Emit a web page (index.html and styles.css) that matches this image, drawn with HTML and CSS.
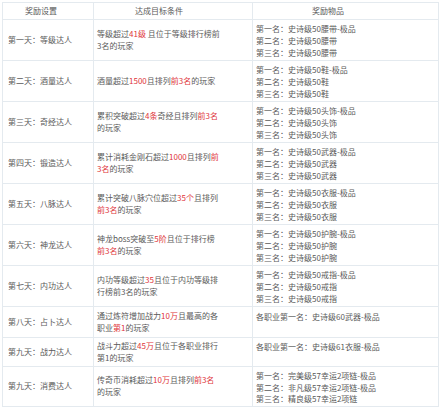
FILE: index.html
```html
<!DOCTYPE html>
<html lang="zh-CN">
<head>
<meta charset="utf-8">
<link rel="stylesheet" href="styles.css">
</head>
<body>
<table class="reward">
  <colgroup>
    <col class="col-day">
    <col class="col-cond">
    <col class="col-prize">
  </colgroup>
  <thead>
    <tr>
      <th class="h-day">奖励设置</th>
      <th class="h-cond">达成目标条件</th>
      <th class="h-prize">奖励物品</th>
    </tr>
  </thead>
  <tbody>
    <tr>
      <td class="day">第一天：等级达人</td>
      <td class="cond">等级超过<span class="red">41级</span> 且位于等级排行榜前<br>3名的玩家</td>
      <td class="prize">第一名：史诗级50腰带-极品<br>第二名：史诗级50腰带<br>第三名：史诗级50腰带</td>
    </tr>
    <tr>
      <td class="day">第二天：酒量达人</td>
      <td class="cond">酒量超过<span class="red">1500</span>且排列<span class="red">前3名</span>的玩家</td>
      <td class="prize">第一名：史诗级50鞋-极品<br>第二名：史诗级50鞋<br>第三名：史诗级50鞋</td>
    </tr>
    <tr>
      <td class="day">第三天：奇经达人</td>
      <td class="cond">累积突破超过<span class="red">4条</span>奇经且排列<span class="red">前3名</span><br>的玩家</td>
      <td class="prize">第一名：史诗级50头饰-极品<br>第二名：史诗级50头饰<br>第三名：史诗级50头饰</td>
    </tr>
    <tr>
      <td class="day">第四天：锻造达人</td>
      <td class="cond">累计消耗金刚石超过<span class="red">1000</span>且排列<span class="red">前</span><br><span class="red">3名</span>的玩家</td>
      <td class="prize">第一名：史诗级50武器-极品<br>第二名：史诗级50武器<br>第三名：史诗级50武器</td>
    </tr>
    <tr>
      <td class="day">第五天：八脉达人</td>
      <td class="cond">累计突破八脉穴位超过<span class="red">35个</span>且排列<br><span class="red">前3名</span>的玩家</td>
      <td class="prize">第一名：史诗级50衣服-极品<br>第二名：史诗级50衣服<br>第三名：史诗级50衣服</td>
    </tr>
    <tr>
      <td class="day">第六天：神龙达人</td>
      <td class="cond">神龙boss突破至<span class="red">5阶</span>且位于排行榜<br><span class="red">前3名</span>的玩家</td>
      <td class="prize">第一名：史诗级50护腕-极品<br>第二名：史诗级50护腕<br>第三名：史诗级50护腕</td>
    </tr>
    <tr>
      <td class="day">第七天：内功达人</td>
      <td class="cond">内功等级超过<span class="red">35</span>且位于内功等级排<br>行榜前3名的玩家</td>
      <td class="prize">第一名：史诗级50戒指-极品<br>第二名：史诗级50戒指<br>第三名：史诗级50戒指</td>
    </tr>
    <tr class="two">
      <td class="day">第八天：占卜达人</td>
      <td class="cond">通过炼符增加战力<span class="red">10万</span>且最高的各<br>职业<span class="red">第1</span>的玩家</td>
      <td class="prize">各职业第一名：史诗级60武器-极品</td>
    </tr>
    <tr>
      <td class="day">第九天：战力达人</td>
      <td class="cond">战斗力超过<span class="red">45万</span>且位于各职业排行<br>第1的玩家</td>
      <td class="prize">各职业第一名：史诗级61衣服-极品</td>
    </tr>
    <tr class="last">
      <td class="day">第九天：消费达人</td>
      <td class="cond">传奇币消耗超过<span class="red">10万</span>且排列<span class="red">前3名</span><br>的玩家</td>
      <td class="prize">第一名：完美级57幸运2项链-极品<br>第二名：非凡级57幸运2项链-极品<br>第三名：精良级57幸运2项链</td>
    </tr>
  </tbody>
</table>
</body>
</html>
```

FILE: styles.css
```css
html, body {
  margin: 0;
  padding: 0;
  background: #ffffff;
}

body {
  font-family: "Noto Sans CJK SC", "Noto Sans", sans-serif;
  color: #5a5a5a;
}

.reward {
  margin: 2px 0 0 2px;
  width: 436px;
  border-collapse: collapse;
  table-layout: fixed;
  font-size: 8px;
  line-height: 12px;
}

.col-day { width: 91px; }
.col-cond { width: 159px; }
.col-prize { width: 186px; }

.reward th,
.reward td {
  border: 1px solid #e4eaef;
  white-space: nowrap;
  overflow: hidden;
}

.reward th {
  height: 16px;
  padding: 0;
  font-weight: normal;
  text-align: left;
  vertical-align: middle;
}

.h-day { padding-left: 22px !important; }
.h-cond { padding-left: 41px !important; }
.h-prize { padding-left: 59px !important; }

.reward td {
  padding: 2px 3px;
}

.day {
  padding-left: 5px !important;
  vertical-align: middle;
}

.cond {
  vertical-align: middle;
}

.prize {
  vertical-align: top;
  padding-top: 3px !important;
  padding-bottom: 1px !important;
}

.two .prize {
  padding-top: 4px !important;
}

.two td {
  padding-top: 3px;
  padding-bottom: 3px;
}

.last .prize {
  line-height: 11.5px;
}

.red {
  color: #e0353b;
}
```
